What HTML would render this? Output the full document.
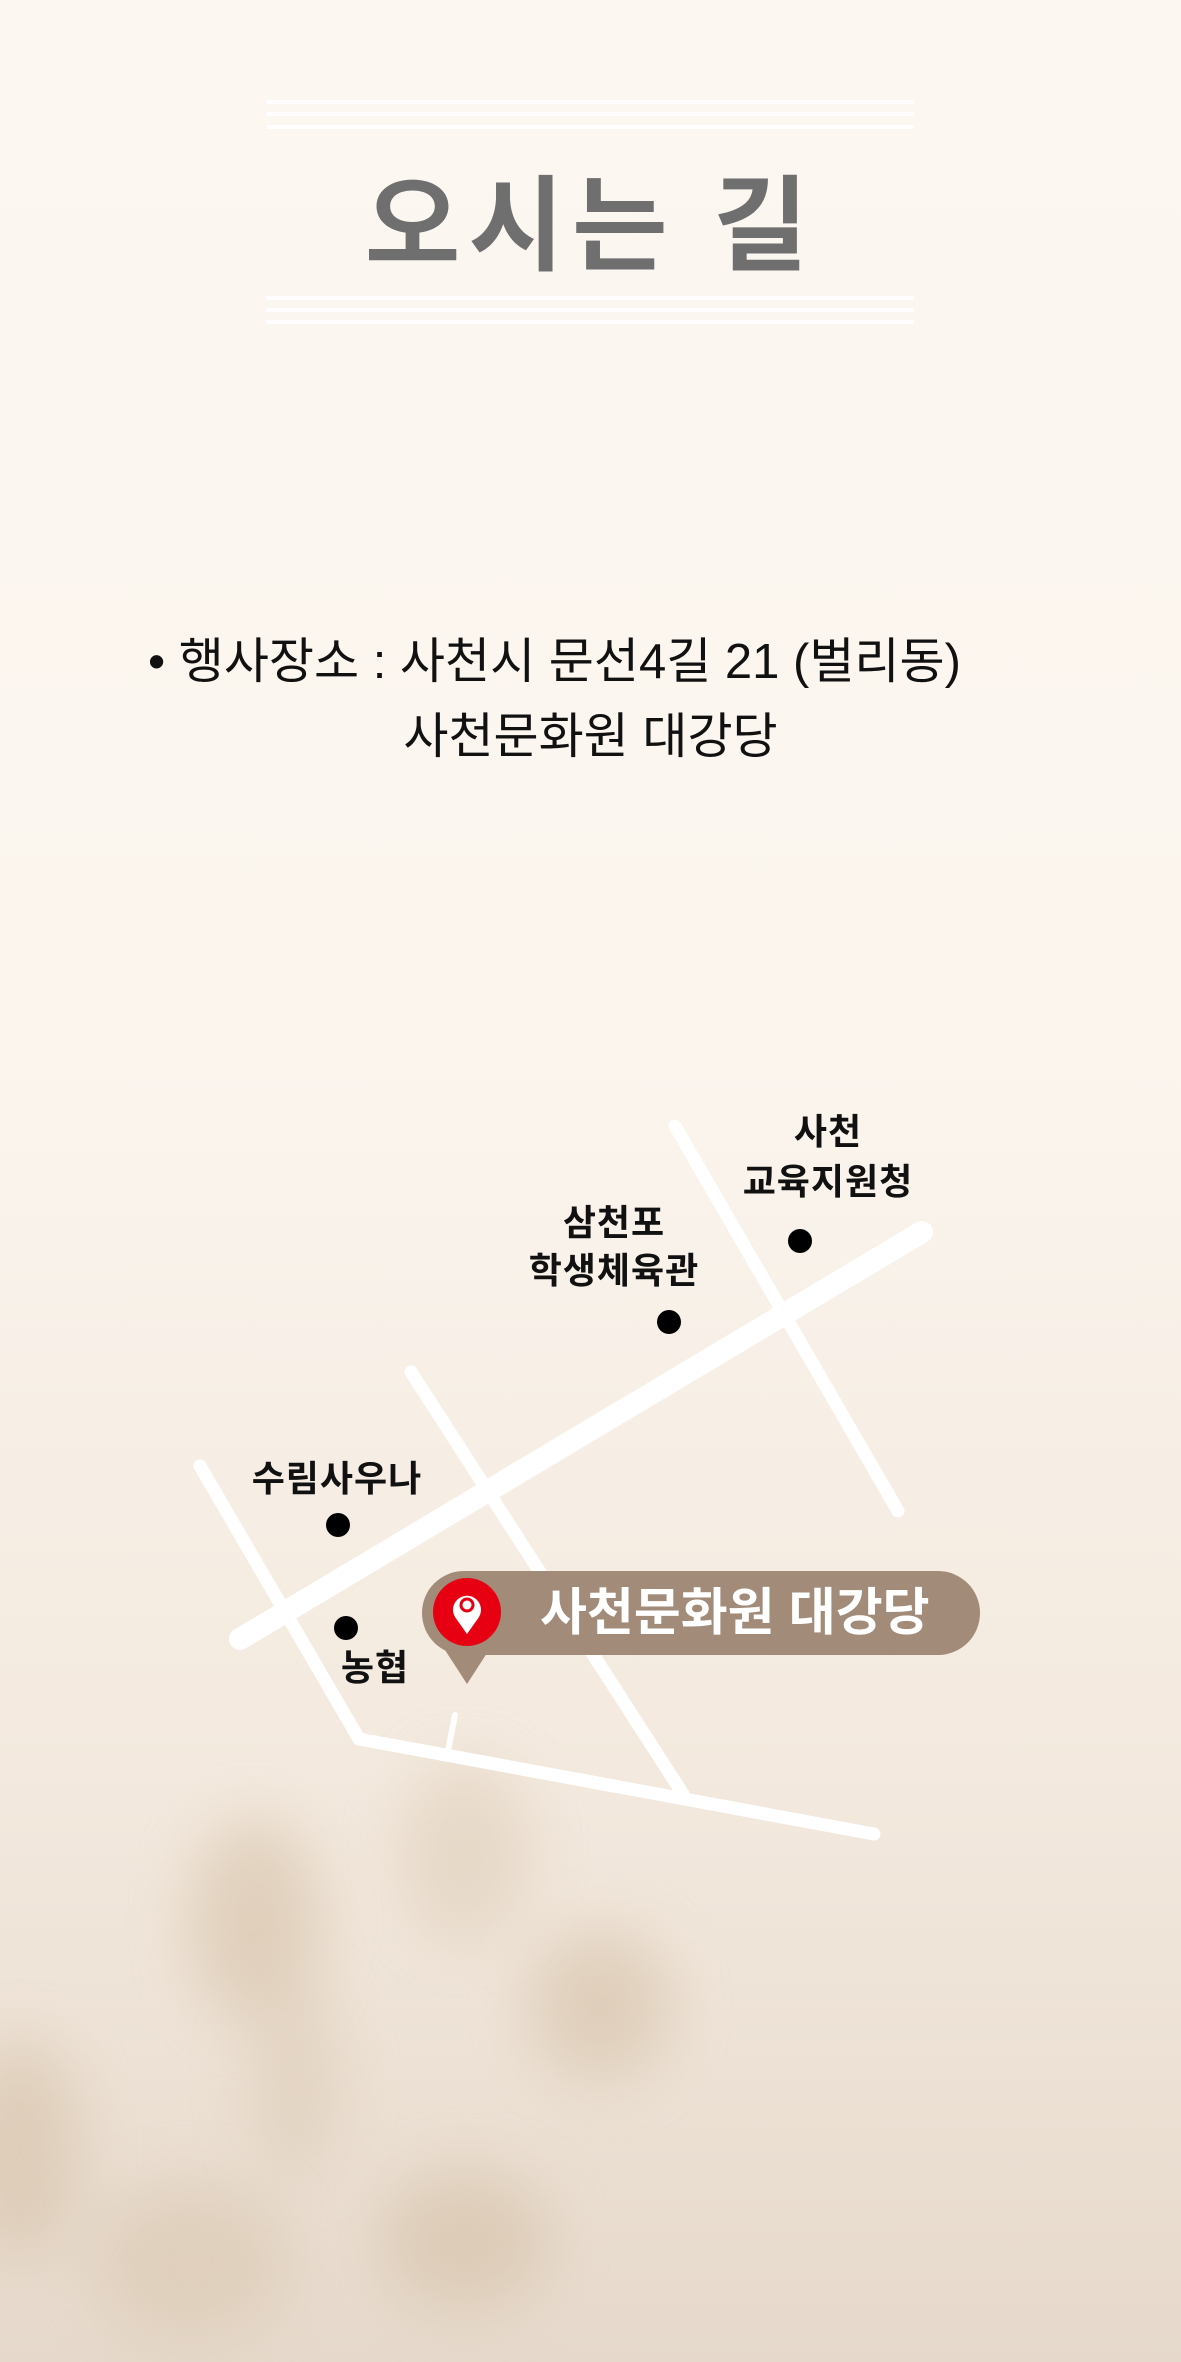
<!DOCTYPE html>
<html><head><meta charset="utf-8"><style>
html,body{margin:0;padding:0}
body{width:1181px;height:2362px;position:relative;overflow:hidden;
background:linear-gradient(180deg,#fcf7f1 0%,#fbf5ee 45%,#f3e9de 75%,#e6d9cb 100%);
font-family:"Liberation Sans","Noto Sans CJK KR",sans-serif}
.bl{position:absolute;border-radius:50%;background:#d3bea4;filter:blur(30px);opacity:.55}
.ln{position:absolute;left:267px;width:647px;height:4px;background:#fff}
.t{position:absolute;left:0;width:1181px;text-align:center;font-weight:700;color:#6f6f6f;font-size:104px;top:170px;letter-spacing:8px;line-height:1.1}
.a{position:absolute;left:0;width:1181px;font-size:49px;color:#111;line-height:1}
.lb{position:absolute;font-weight:700;font-size:36px;color:#111;text-align:center;width:260px;line-height:1;letter-spacing:1px}
</style></head><body>
<div class="bl" style="left:190px;top:1820px;width:130px;height:200px"></div>
<div class="bl" style="left:530px;top:1930px;width:140px;height:150px"></div>
<div class="bl" style="left:380px;top:2170px;width:170px;height:140px"></div>
<div class="bl" style="left:-40px;top:2040px;width:120px;height:220px"></div>
<div class="bl" style="left:400px;top:1760px;width:130px;height:180px;opacity:.35"></div>
<div class="bl" style="left:90px;top:2180px;width:200px;height:160px;opacity:.4"></div>
<div class="bl" style="left:250px;top:1980px;width:90px;height:200px;opacity:.35"></div>

<div class="ln" style="top:100px"></div><div class="ln" style="top:112px"></div><div class="ln" style="top:125px"></div>
<div class="ln" style="top:296px"></div><div class="ln" style="top:308px"></div><div class="ln" style="top:320px"></div>
<div class="t">오시는 길</div>

<div class="a" style="top:638px;left:148px;width:auto">• 행사장소 : 사천시 문선4길 21 (벌리동)</div>
<div class="a" style="top:713px;text-align:center;left:0">사천문화원 대강당</div>

<svg width="1181" height="2362" style="position:absolute;left:0;top:0">
<g stroke="#fff" stroke-linecap="round" fill="none">
<path d="M675 1126 L898 1511" stroke-width="13"/>
<path d="M411 1372 L683 1794" stroke-width="13"/>
<path d="M200 1466 L359 1739 L874 1834" stroke-width="13" stroke-linejoin="round"/>
<path d="M455 1715 L448 1751" stroke-width="6"/>
<path d="M240 1639 L922 1232" stroke-width="22"/>
</g>
<g fill="#000"><circle cx="800" cy="1241" r="12"/><circle cx="669" cy="1322" r="12"/><circle cx="338" cy="1525" r="12"/><circle cx="346" cy="1628" r="12"/></g>
<rect x="422" y="1571" width="558" height="84" rx="42" fill="#a28b78"/>
<path d="M445 1650 L467 1684 L489 1650 Z" fill="#a28b78"/>
<circle cx="467" cy="1612" r="34" fill="#e60012"/>
<path d="M467 1634 L455 1617 A14 14 0 1 1 479 1617 Z" fill="#fff"/>
<circle cx="467" cy="1605" r="6" fill="#fff" stroke="#e60012" stroke-width="3"/>
<text x="540" y="1630" font-family="Liberation Sans,Noto Sans CJK KR,sans-serif" font-weight="700" font-size="51" fill="#fff">사천문화원 대강당</text>
</svg>
<div class="lb" style="left:698px;top:1114px">사천</div>
<div class="lb" style="left:698px;top:1164px">교육지원청</div>
<div class="lb" style="left:484px;top:1205px">삼천포</div>
<div class="lb" style="left:484px;top:1253px">학생체육관</div>
<div class="lb" style="left:207px;top:1461px">수림사우나</div>
<div class="lb" style="left:245px;top:1650px">농협</div>
</body></html>
